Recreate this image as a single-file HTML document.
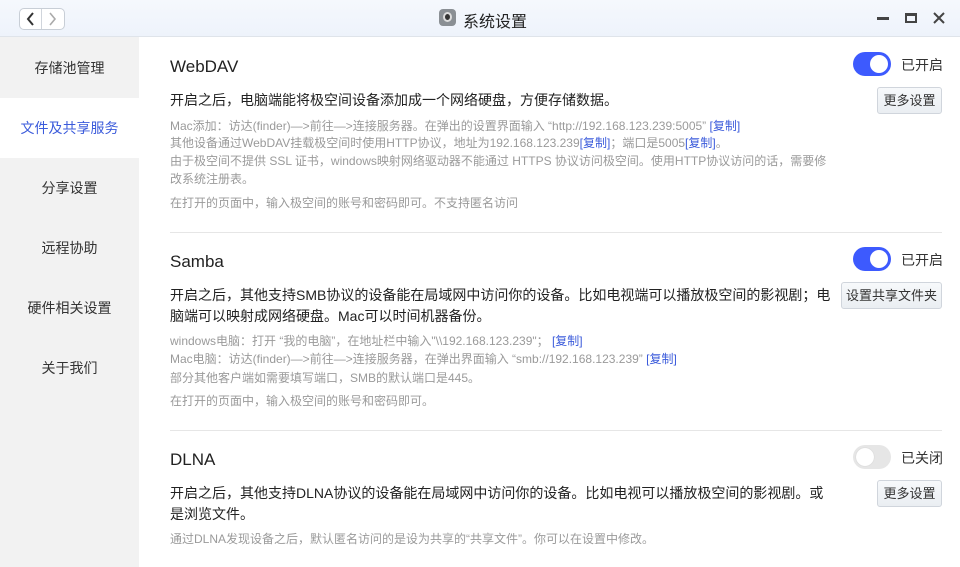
<!DOCTYPE html>
<html><head><meta charset="utf-8"><style>
*{margin:0;padding:0;box-sizing:border-box}
body{width:960px;height:567px;overflow:hidden;background:#fff;font-family:"Liberation Sans","Noto Sans CJK SC",sans-serif;position:relative;color:#333}
.a{position:absolute;white-space:nowrap}
.tb{position:absolute;left:0;top:0;width:960px;height:37px;background:linear-gradient(#f5f8fd,#eef3fb);border-bottom:1px solid #dfe4ea}
.side{position:absolute;left:0;top:37px;width:139px;height:530px;background:#f2f2f2}
.si{position:absolute;left:0;width:139px;height:60px;line-height:60px;text-align:center;font-size:14px;color:#333}
.t{font-size:17px;color:#222}
.m{font-size:14px;color:#222;line-height:21px}
.s{font-size:12px;color:#9a9a9a;line-height:18px}
.c{color:#3b5bdb}
.tg{position:absolute;width:38px;height:24px;border-radius:12px;background:#3d5afe}
.tg::after{content:"";position:absolute;top:3px;left:17px;width:18px;height:18px;border-radius:50%;background:#fff}
.tg.off{background:#e6e6e6}
.tg.off::after{left:3px;box-shadow:0 0 1px #bbb}
.btn{position:absolute;height:27px;border:1px solid #d0d5dc;border-radius:3px;background:linear-gradient(#f7f9fb,#eaeef2);font-size:13px;line-height:25px;text-align:center;color:#333}
.hr{position:absolute;left:170px;width:772px;height:1px;background:#e6e6e6}
</style></head><body>
<div class="tb"></div>
<div class="a" style="left:19px;top:8px;width:46px;height:22px;border:1px solid #c8ced6;border-radius:5px;background:#fff"></div>
<div class="a" style="left:41px;top:9px;width:1px;height:20px;background:#d0d5dc"></div>
<svg class="a" style="left:19px;top:8px" width="46" height="22"><path d="M14 5 L9 11 L14 17" stroke="#333" stroke-width="2" fill="none"/><path d="M31 5 L36 11 L31 17" stroke="#aaa" stroke-width="1.6" fill="none"/></svg>
<div class="a" style="left:439px;top:9px;width:17px;height:17px;border-radius:4px;background:#8a8f94"></div>
<div class="a" style="left:443px;top:12px;width:9px;height:10px;border-radius:50%;background:#333;border:2px solid #ddd"></div>
<div class="a" style="left:463px;top:8px;font-size:16px;color:#222">系统设置</div>
<div class="a" style="left:877px;top:17px;width:12px;height:3px;background:#444"></div>
<div class="a" style="left:905px;top:13px;width:12px;height:10px;border:2px solid #444;border-top-width:3px"></div>
<svg class="a" style="left:933px;top:12px" width="12" height="12"><path d="M1 1L11 11M11 1L1 11" stroke="#444" stroke-width="2"/></svg>
<div class="side"></div>
<div class="si" style="top:38px">存储池管理</div>
<div class="si" style="top:98px;background:#fff;color:#3b5bdb">文件及共享服务</div>
<div class="si" style="top:158px">分享设置</div>
<div class="si" style="top:218px">远程协助</div>
<div class="si" style="top:278px">硬件相关设置</div>
<div class="si" style="top:338px">关于我们</div>

<div class="a t" style="left:170px;top:57px">WebDAV</div>
<div class="tg" style="left:853px;top:52px"></div><div class="a" style="left:901px;top:55px;font-size:14px">已开启</div>
<div class="btn" style="left:877px;top:87px;width:65px">更多设置</div>
<div class="a m" style="left:170px;top:90px">开启之后，电脑端能将极空间设备添加成一个网络硬盘，方便存储数据。</div>
<div class="a s" style="left:170px;top:117px">Mac添加：访达(finder)—&gt;前往—&gt;连接服务器。在弹出的设置界面输入 “http://192.168.123.239:5005” <span class="c">[复制]</span></div>
<div class="a s" style="left:170px;top:134px">其他设备通过WebDAV挂载极空间时使用HTTP协议，地址为192.168.123.239<span class="c">[复制]</span>；端口是5005<span class="c">[复制]</span>。</div>
<div class="a s" style="left:170px;top:152px">由于极空间不提供 SSL 证书，windows映射网络驱动器不能通过 HTTPS 协议访问极空间。使用HTTP协议访问的话，需要修</div>
<div class="a s" style="left:170px;top:170px">改系统注册表。</div>
<div class="a s" style="left:170px;top:194px">在打开的页面中，输入极空间的账号和密码即可。不支持匿名访问</div>
<div class="hr" style="top:232px"></div>

<div class="a t" style="left:170px;top:252px">Samba</div>
<div class="tg" style="left:853px;top:247px"></div><div class="a" style="left:901px;top:250px;font-size:14px">已开启</div>
<div class="btn" style="left:841px;top:282px;width:101px">设置共享文件夹</div>
<div class="a m" style="left:170px;top:285px">开启之后，其他支持SMB协议的设备能在局域网中访问你的设备。比如电视端可以播放极空间的影视剧；电</div>
<div class="a m" style="left:170px;top:306px">脑端可以映射成网络硬盘。Mac可以时间机器备份。</div>
<div class="a s" style="left:170px;top:332px">windows电脑：打开 “我的电脑”，在地址栏中输入"\\192.168.123.239"； <span class="c">[复制]</span></div>
<div class="a s" style="left:170px;top:350px">Mac电脑：访达(finder)—&gt;前往—&gt;连接服务器，在弹出界面输入 “smb://192.168.123.239” <span class="c">[复制]</span></div>
<div class="a s" style="left:170px;top:369px">部分其他客户端如需要填写端口，SMB的默认端口是445。</div>
<div class="a s" style="left:170px;top:392px">在打开的页面中，输入极空间的账号和密码即可。</div>
<div class="hr" style="top:430px"></div>

<div class="a t" style="left:170px;top:450px">DLNA</div>
<div class="tg off" style="left:853px;top:445px"></div><div class="a" style="left:901px;top:448px;font-size:14px">已关闭</div>
<div class="btn" style="left:877px;top:480px;width:65px">更多设置</div>
<div class="a m" style="left:170px;top:483px">开启之后，其他支持DLNA协议的设备能在局域网中访问你的设备。比如电视可以播放极空间的影视剧。或</div>
<div class="a m" style="left:170px;top:504px">是浏览文件。</div>
<div class="a s" style="left:170px;top:530px">通过DLNA发现设备之后，默认匿名访问的是设为共享的“共享文件”。你可以在设置中修改。</div>
</body></html>
